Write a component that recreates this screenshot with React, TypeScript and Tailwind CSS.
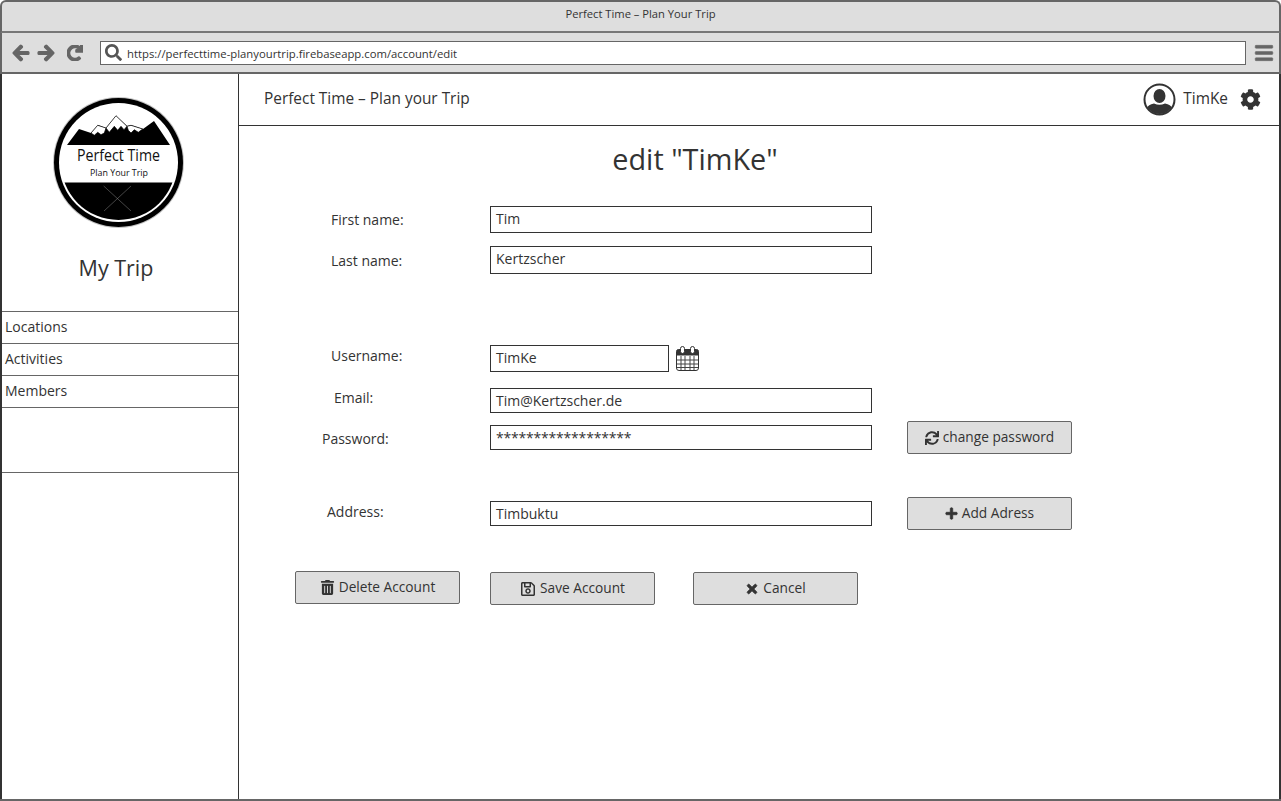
import { FaArrowLeft, FaArrowRight, FaBars, FaCog, FaPlus, FaRedo, FaRegSave, FaSearch, FaSync, FaTimes, FaTrashAlt } from "react-icons/fa";
import type { ReactNode } from "react";

const font = "font-['Open_Sans','Noto_Sans',sans-serif]";

function Logo() {
  return (
    <svg width="134" height="134" viewBox="0 0 134 134" className="block">
      <defs>
        <clipPath id="inner"><circle cx="67.5" cy="67.5" r="57.5" /></clipPath>
      </defs>
      <circle cx="67.5" cy="67.5" r="65.5" fill="#c4c4c4" />
      <circle cx="67.5" cy="67.5" r="64.5" fill="#000" />
      <circle cx="67.5" cy="67.5" r="59.5" fill="#fff" />
      <g clipPath="url(#inner)">
        <path d="M16 50 L28 34 L40 38 L47 30 L55 33 L65 21 L76 31 L80 30 L92 34 L103 26 L119 50 Z" fill="#000" />
        <g fill="#fff" stroke="#000" strokeWidth="0.7">
          <path d="M40 38 L46.7 30.3 L55 33 L53.3 38 L50 39.7 L46.7 37.3 L43.3 40.3 Z" />
          <path d="M55 33 L65 20.7 L76 31.3 L73 34.7 L70 31.3 L66.7 35.3 L63.3 31.3 L58.3 37.3 Z" />
          <path d="M76 31.3 L80 30.3 L91.7 34 L87.3 37.3 L83.3 34.7 L80 38 L77.3 35.3 Z" />
        </g>
        <rect x="0" y="87.5" width="134" height="46" fill="#000" />
        <path d="M52.7 91 L80 116 M80 91 L53 116" stroke="#888" strokeWidth="0.5" />
      </g>
      <text x="26" y="66" textLength="83" lengthAdjust="spacingAndGlyphs" fontSize="15.5" fontFamily="Open Sans" fill="#111">Perfect Time</text>
      <text x="39" y="81" textLength="58" lengthAdjust="spacingAndGlyphs" fontSize="9.5" fontFamily="Open Sans" fill="#111">Plan Your Trip</text>
    </svg>
  );
}

function UserIcon() {
  return (
    <svg width="33" height="33" viewBox="0 0 33 33" className="block">
      <defs>
        <clipPath id="u"><circle cx="16.5" cy="16.5" r="14.5" /></clipPath>
      </defs>
      <circle cx="16.5" cy="16.5" r="15" fill="#fff" stroke="#333" strokeWidth="2" />
      <g clipPath="url(#u)" fill="#333">
        <ellipse cx="16.5" cy="13" rx="6" ry="7" />
        <path d="M3 33 L4 25 Q5 21.5 11 20.5 Q16.5 23 22 20.5 Q28 21.5 29 25 L30 33 Z" />
      </g>
    </svg>
  );
}

function CalendarIcon() {
  return (
    <svg width="23" height="25" viewBox="0 0 23 25" className="block">
      <path d="M2.5 3.5 H20.5 Q22.5 3.5 22.5 5.5 V22 Q22.5 24.5 20 24.5 H3 Q0.5 24.5 0.5 22 V5.5 Q0.5 3.5 2.5 3.5 Z" fill="#fff" stroke="#333" />
      <path d="M0.5 9.5 V5.5 Q0.5 3.5 2.5 3.5 H20.5 Q22.5 3.5 22.5 5.5 V9.5 Z" fill="#333" />
      <rect x="4.5" y="0.5" width="4" height="7" rx="2" fill="#fff" stroke="#333" />
      <rect x="14.5" y="0.5" width="4" height="7" rx="2" fill="#fff" stroke="#333" />
      <path d="M1 14 H22 M1 18 H22 M1 21.5 H22 M5 10 V24 M9 10 V24 M14 10 V24 M18 10 V24" stroke="#444" strokeWidth="1" />
    </svg>
  );
}

function Btn({ icon, label, className = "" }: { icon: ReactNode; label: string; className?: string }) {
  return (
    <button className={`flex h-[33px] w-[165px] shrink-0 items-center justify-center gap-[4px] rounded-[2px] border border-[#666] bg-[#dedede] text-[13.7px] text-[#333] ${className}`}>
      {icon}
      <span>{label}</span>
    </button>
  );
}

function Label({ children, className }: { children: ReactNode; className: string }) {
  return <div className={`shrink-0 whitespace-nowrap text-[14px] leading-[20px] text-[#333] ${className}`}>{children}</div>;
}

function Field({ value, className = "w-[382px]", text = "" }: { value: string; className?: string; text?: string }) {
  return (
    <div className={`flex shrink-0 items-center border border-[#333] bg-white pl-[5px] text-[14px] text-[#333] ${className} ${text}`}>
      {value}
    </div>
  );
}

export default function App() {
  return (
    <div className={`flex h-[801px] w-[1281px] flex-col overflow-hidden bg-white ${font}`}>
      <div className="flex h-[33px] shrink-0 items-center justify-center rounded-t-[6px] border-x-2 border-t-2 border-b-2 border-x-[#666] border-t-[#666] border-b-[#777] bg-[#dedede] pb-[5px] text-[11.2px] text-[#333]">
        Perfect Time – Plan Your Trip
      </div>
      <div className="flex h-[41px] shrink-0 items-center border-x-2 border-b-2 border-[#666] bg-[#dedede]">
        <FaArrowLeft className="ml-[10px] text-[18px] text-[#666]" stroke="currentColor" strokeWidth="40" />
        <FaArrowRight className="ml-[7px] text-[18px] text-[#666]" stroke="currentColor" strokeWidth="40" />
        <FaRedo className="ml-[12px] text-[16px] text-[#666]" stroke="currentColor" strokeWidth="50" />
        <div className="ml-[17px] flex h-[24px] w-[1146px] items-center border border-[#666] bg-white text-[11.3px] text-[#333]">
          <FaSearch className="ml-[4px] mr-[5px] text-[17px] text-[#555]" />
          <span className="pt-[3px]">https://perfecttime-planyourtrip.firebaseapp.com/account/edit</span>
        </div>
        <FaBars className="ml-[8px] text-[20px] text-[#666]" stroke="currentColor" strokeWidth="15" />
      </div>

      <div className="flex min-h-0 flex-1 border-b-2 border-[#666]">
        <aside className="flex w-[238px] shrink-0 flex-col border-l-2 border-l-[#333]">
          <div className="flex justify-center pr-[5px] pt-[21px]">
            <Logo />
          </div>
          <div className="mt-[25px] pr-[8px] text-center text-[21.5px] leading-[28px] text-[#333]">My Trip</div>
          <div className="mt-[29px] flex flex-col border-t border-[#666] text-[14px] text-[#333]">
            {["Locations", "Activities", "Members"].map((t) => (
              <div key={t} className="flex h-[32px] items-center border-b border-[#666] pb-[2px] pl-[3px]">{t}</div>
            ))}
            <div className="h-[65px] border-b border-[#666]" />
          </div>
        </aside>

        <main className="flex min-w-0 flex-1 flex-col border-l border-r-2 border-l-[#333] border-r-[#333]">
          <header className="flex h-[52px] shrink-0 items-center border-b border-[#333] pb-[1px] pl-[25px] pr-[18px] text-[15.4px] text-[#333]">
            <span>Perfect Time – Plan your Trip</span>
            <div className="ml-auto flex items-center">
              <UserIcon />
              <span className="ml-[7px]">TimKe</span>
              <FaCog className="ml-[12px] text-[21px] text-[#333]" />
            </div>
          </header>

          <h1 className="mt-[14px] pr-[128px] text-center text-[28.8px] font-normal leading-[38px] text-[#333]">edit "TimKe"</h1>

          <div className="mt-[28px] flex h-[27px] items-center">
            <Label className="ml-[92px] w-[159px]">First name:</Label>
            <Field value="Tim" className="h-[27px] w-[382px] pb-[3px] pl-[4px]" />
          </div>
          <div className="mt-[13px] flex h-[28px] items-center">
            <Label className="ml-[92px] w-[159px] translate-y-[1px]">Last name:</Label>
            <Field value="Kertzscher" className="h-[28px] w-[382px] pb-[4px]" />
          </div>
          <div className="mt-[71px] flex h-[27px] items-center">
            <Label className="ml-[92px] w-[159px] -translate-y-[3px]">Username:</Label>
            <Field value="TimKe" className="h-[27px] w-[179px] pb-[3px]" />
            <div className="ml-[7px]"><CalendarIcon /></div>
          </div>
          <div className="mt-[16px] flex h-[25px] items-center">
            <Label className="ml-[95px] w-[156px] -translate-y-[3px]">Email:</Label>
            <Field value="Tim@Kertzscher.de" className="h-[25px] w-[382px] pb-[1px]" />
          </div>
          <div className="mt-[12px] flex h-[25px] items-center">
            <Label className="ml-[83px] w-[168px] translate-y-[1px]">Password:</Label>
            <Field value="******************" className="h-[25px] w-[382px]" text="pb-[1px] tracking-[-0.2px]" />
            <Btn className="ml-[35px]" icon={<FaSync className="text-[14px]" />} label="change password" />
          </div>
          <div className="mt-[51px] flex h-[25px] items-center">
            <Label className="ml-[88px] w-[163px] -translate-y-[2px]">Address:</Label>
            <Field value="Timbuktu" className="h-[25px] w-[382px] pb-[1px]" />
            <Btn className="ml-[35px]" icon={<FaPlus className="text-[13px]" stroke="currentColor" strokeWidth="30" />} label="Add Adress" />
          </div>
          <div className="mt-[46px] flex">
            <Btn className="ml-[56px] -mt-[1px]" icon={<FaTrashAlt className="text-[15px]" />} label="Delete Account" />
            <Btn className="ml-[30px]" icon={<FaRegSave className="text-[16px]" />} label="Save Account" />
            <Btn className="ml-[38px]" icon={<FaTimes className="text-[14px]" stroke="currentColor" strokeWidth="30" />} label="Cancel" />
          </div>
        </main>
      </div>
    </div>
  );
}
